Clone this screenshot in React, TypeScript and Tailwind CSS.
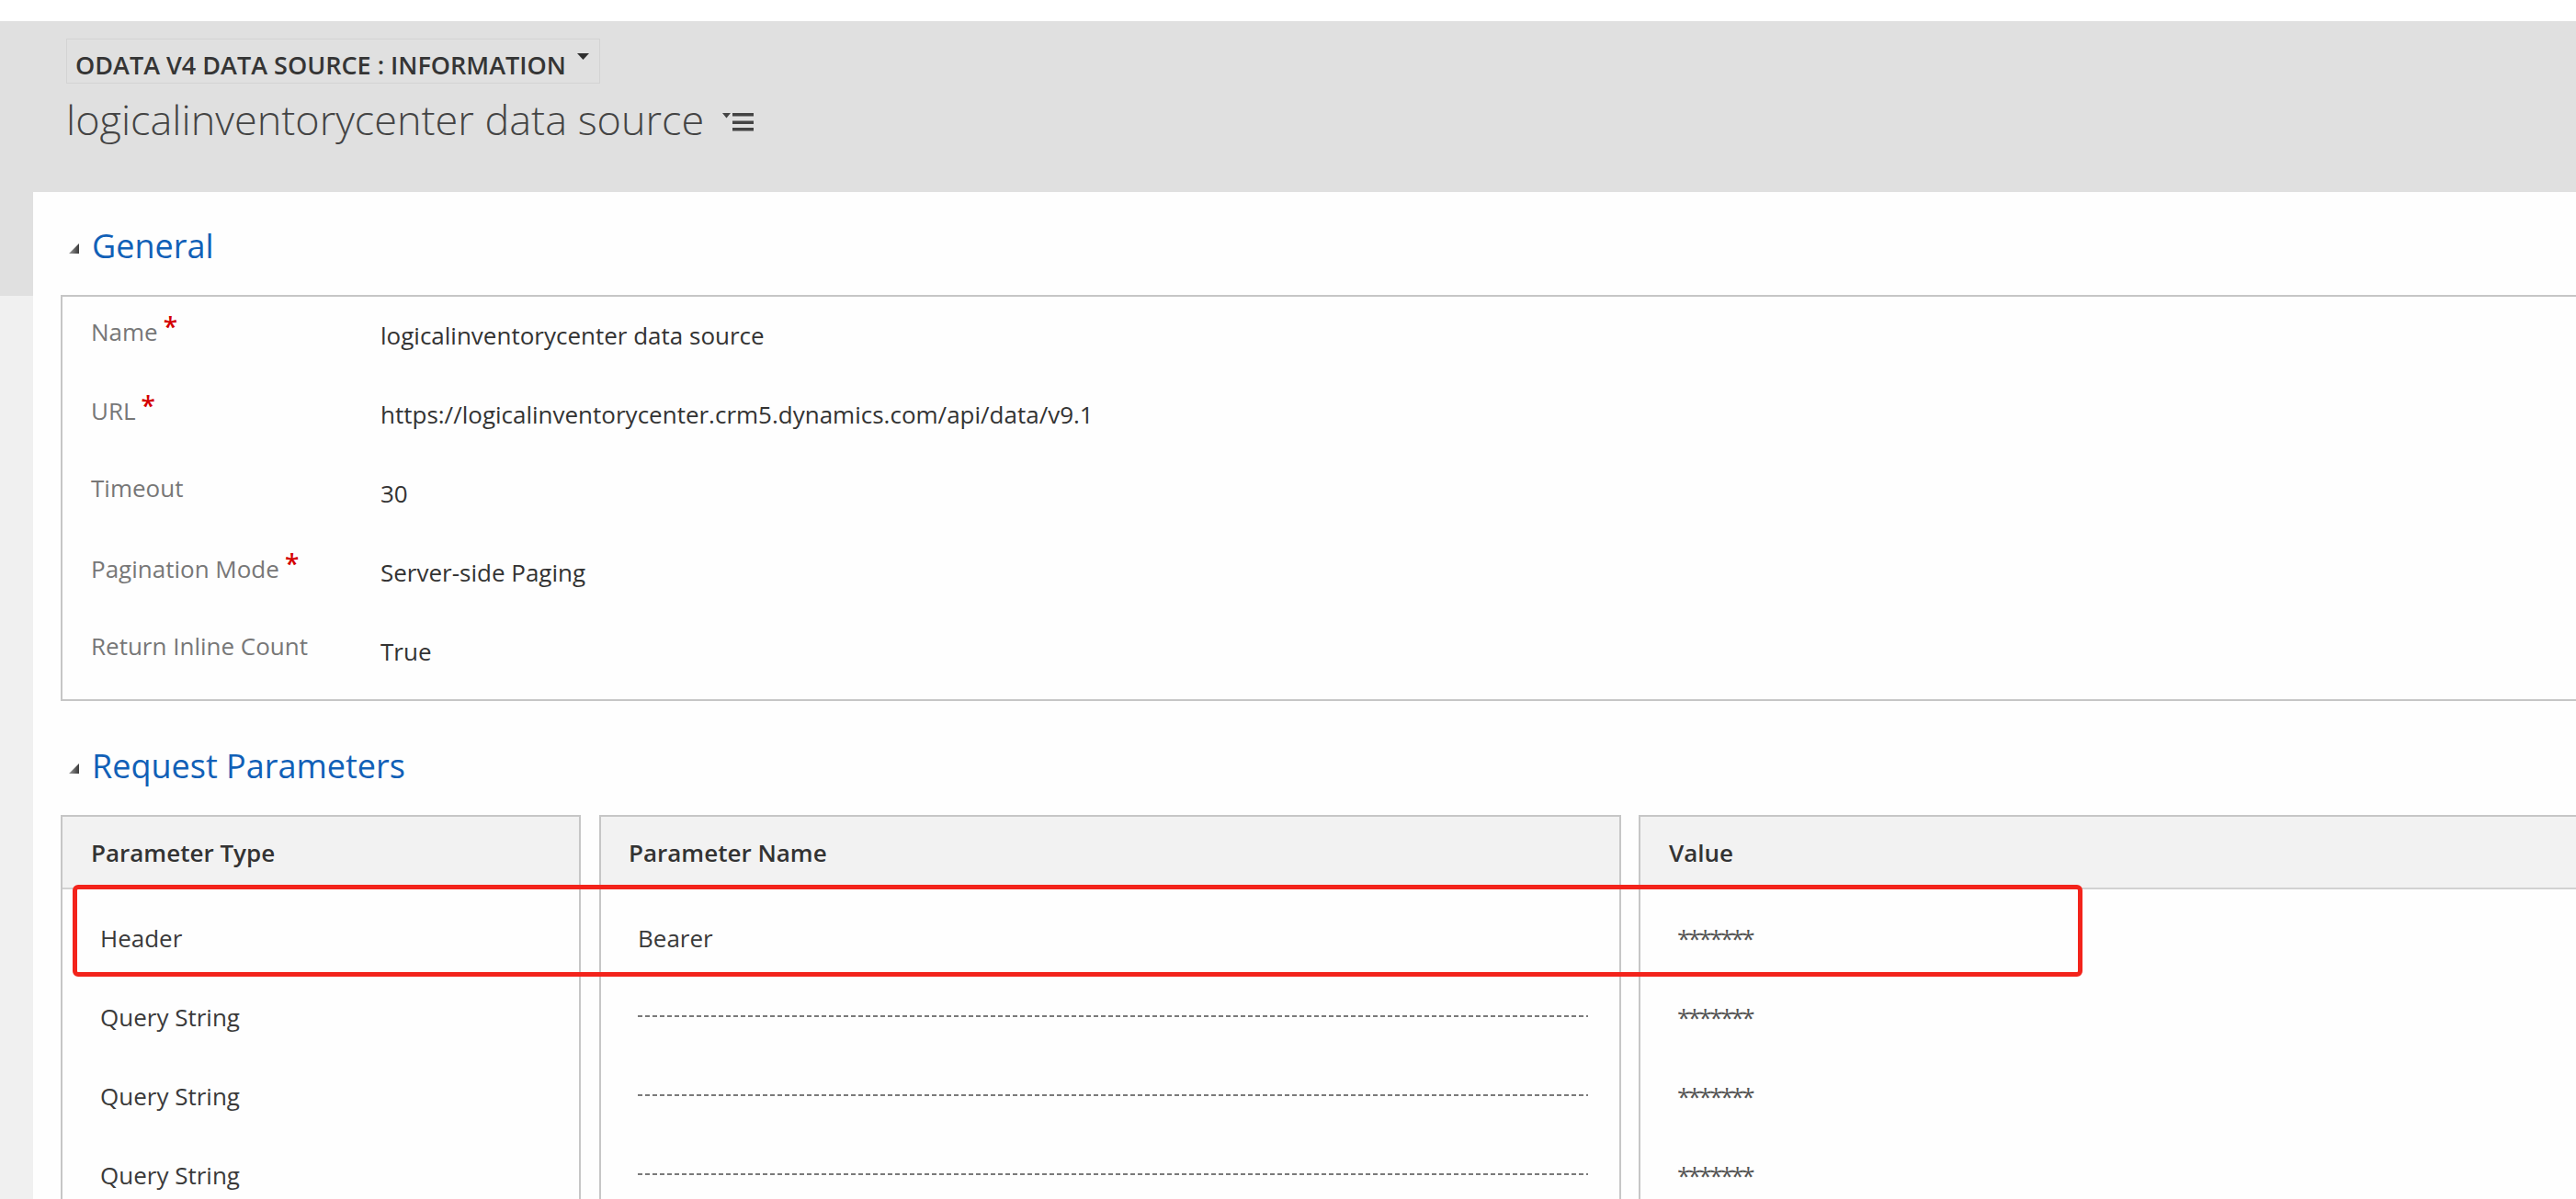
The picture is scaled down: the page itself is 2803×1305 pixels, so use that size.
import React from "react";

const generalRows = [
  { label: "Name", value: "logicalinventorycenter data source", required: true },
  { label: "URL", value: "https://logicalinventorycenter.crm5.dynamics.com/api/data/v9.1", required: true },
  { label: "Timeout", value: "30", required: false },
  { label: "Pagination Mode", value: "Server-side Paging", required: true },
  { label: "Return Inline Count", value: "True", required: false },
];

const paramRows = [
  { type: "Header", name: "Bearer", value: "*******" },
  { type: "Query String", name: null, value: "*******" },
  { type: "Query String", name: null, value: "*******" },
  { type: "Query String", name: null, value: "*******" },
];

function SectionTriangle() {
  return (
    <svg width="12" height="11" viewBox="0 0 12 11" className="ml-[9px] mt-[21px] shrink-0">
      <defs>
        <linearGradient id="tg" x1="0" y1="0" x2="1" y2="0">
          <stop offset="0" stopColor="#9a9a9a" />
          <stop offset="1" stopColor="#3a3a3a" />
        </linearGradient>
      </defs>
      <polygon points="0,11 11,0 11,11" fill="url(#tg)" />
    </svg>
  );
}

function SectionHeader({ title }: { title: string }) {
  return (
    <div className="flex h-[48px] items-start">
      <SectionTriangle />
      <span className="ml-[13px] text-[36px] leading-[48px] text-[#1160b7]">{title}</span>
    </div>
  );
}

function Asterisk() {
  return (
    <span className="ml-[6px] align-[5px] text-[28px] font-semibold leading-none text-[#d40000]">*</span>
  );
}

export default function App() {
  return (
    <div className="h-[1305px] w-[2803px] overflow-hidden bg-white font-['Open_Sans','Noto_Sans',sans-serif]">
      <div className="h-[23px] bg-white" />
      <header className="h-[186px] bg-[#e0e0e0] pl-[72px] pt-[19px]">
        <div className="flex h-[49px] w-[581px] items-start border border-[#d3d3d3] pl-[9px] pt-[14px]">
          <span className="text-[27px] font-semibold leading-[27px] text-[#353535]">
            ODATA V4 DATA SOURCE : INFORMATION
          </span>
          <svg width="13" height="7" viewBox="0 0 13 7" className="ml-[12px] mt-[1px] shrink-0">
            <polygon points="0,0 13,0 6.5,7" fill="#2f2f2f" />
          </svg>
        </div>
        <div className="mt-[14px] flex h-[49px] items-start">
          <h1 className="text-[45px] font-light leading-[49px] text-[#444]">
            logicalinventorycenter data source
          </h1>
          <svg width="34" height="21" viewBox="0 0 34 21" className="ml-[20px] mt-[17px] shrink-0">
            <polygon points="0,1 9,1 4.5,6.5" fill="#444" />
            <rect x="11" y="1" width="23" height="3.5" fill="#444" />
            <rect x="11" y="9.5" width="23" height="3.5" fill="#444" />
            <rect x="11" y="17" width="23" height="3.5" fill="#444" />
          </svg>
        </div>
      </header>

      <div className="flex h-[1096px]">
        <div className="flex w-[36px] shrink-0 flex-col">
          <div className="h-[113px] bg-[#e0e0e0]" />
          <div className="flex-1 bg-[#f0f0f0]" />
        </div>

        <main className="min-w-0 flex-1 bg-[#fefefe] pl-[30px] pt-[35px]">
          <SectionHeader title="General" />

          <div className="mt-[29px] h-[442px] border-2 border-r-0 border-[#c6c6c6] pt-[3px]">
            {generalRows.map((r) => (
              <div key={r.label} className="flex h-[86px] text-[26px] leading-[36px]">
                <div className="w-[346px] shrink-0 pl-[31px] pt-[15px] text-[#777]">
                  {r.label}
                  {r.required && <Asterisk />}
                </div>
                <div className="pt-[21px] text-[#333]">{r.value}</div>
              </div>
            ))}
          </div>

          <div className="mt-[47px]">
            <SectionHeader title="Request Parameters" />
          </div>

          <div className="relative mt-[29px] flex h-[600px]">
            {/* Parameter Type */}
            <div className="w-[566px] shrink-0 border-x-2 border-t-2 border-[#c6c6c6]">
              <div className="h-[79px] border-b-2 border-[#d2d2d2] bg-[#f2f2f2] pl-[31px] pt-[21px] text-[26px] font-semibold leading-[36px] text-[#333]">
                Parameter Type
              </div>
              <div className="pt-[20px]">
                {paramRows.map((r, i) => (
                  <div key={i} className="h-[86px] pl-[41px] pt-[15px] text-[26px] leading-[36px] text-[#3a3a3a]">
                    {r.type}
                  </div>
                ))}
              </div>
            </div>

            {/* Parameter Name */}
            <div className="ml-[20px] w-[1112px] shrink-0 border-x-2 border-t-2 border-[#c6c6c6]">
              <div className="h-[79px] border-b-2 border-[#d2d2d2] bg-[#f2f2f2] pl-[30px] pt-[21px] text-[26px] font-semibold leading-[36px] text-[#333]">
                Parameter Name
              </div>
              <div className="pt-[20px]">
                {paramRows.map((r, i) =>
                  r.name ? (
                    <div key={i} className="h-[86px] pl-[40px] pt-[15px] text-[26px] leading-[36px] text-[#3a3a3a]">
                      {r.name}
                    </div>
                  ) : (
                    <div key={i} className="h-[86px] pl-[40px] pt-[31px]">
                      <div className="h-[2px] w-[1034px] bg-[repeating-linear-gradient(90deg,#7a7a7a_0_5px,transparent_5px_8px)]" />
                    </div>
                  )
                )}
              </div>
            </div>

            {/* Value */}
            <div className="ml-[19px] min-w-0 flex-1 border-l-2 border-t-2 border-[#c6c6c6]">
              <div className="h-[79px] border-b-2 border-[#d2d2d2] bg-[#f2f2f2] pl-[31px] pt-[21px] text-[26px] font-semibold leading-[36px] text-[#333]">
                Value
              </div>
              <div className="pt-[20px]">
                {paramRows.map((r, i) => (
                  <div key={i} className="h-[86px] pl-[40px] pt-[15px] text-[26px] leading-[36px] tracking-[-2.6px] text-[#555]">
                    {r.value}
                  </div>
                ))}
              </div>
            </div>

            {/* red annotation */}
            <div className="pointer-events-none absolute left-[13px] top-[76px] h-[100px] w-[2187px] rounded-[6px] border-[5px] border-[#f3231b]" />
          </div>
        </main>
      </div>
    </div>
  );
}
